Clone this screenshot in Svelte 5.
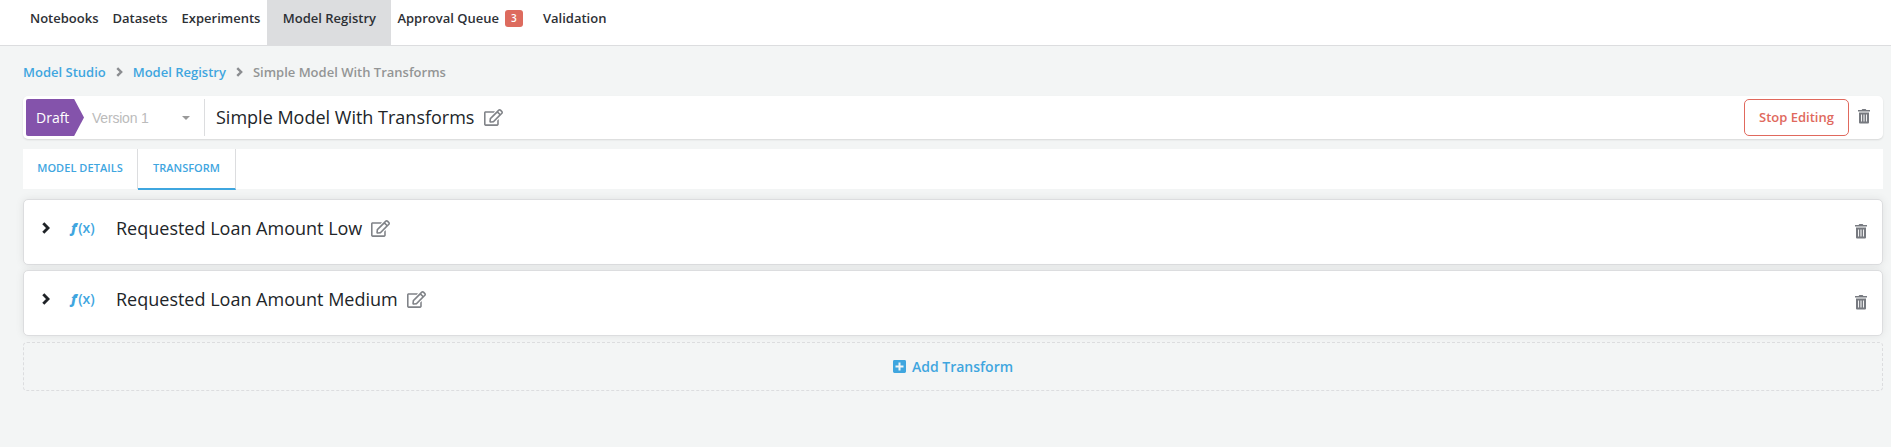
<script>
  const navLeft = ['Notebooks', 'Datasets', 'Experiments'];
  const transforms = ['Requested Loan Amount Low', 'Requested Loan Amount Medium'];
</script>

{#snippet edit()}
  <svg class="edit" viewBox="0 0 576 512" aria-hidden="true">
    <path d="M402.3 344.9l32-32c5-5 13.7-1.5 13.7 5.7V464c0 26.5-21.5 48-48 48H48c-26.5 0-48-21.5-48-48V112c0-26.5 21.5-48 48-48h273.5c7.1 0 10.7 8.6 5.7 13.7l-32 32c-1.5 1.5-3.5 2.3-5.7 2.3H48v352h352V350.5c0-2.1.8-4.1 2.3-5.6zm156.6-201.8L296.3 405.7l-90.4 10c-26.2 2.9-48.5-19.2-45.6-45.6l10-90.4L432.9 17.1c22.9-22.9 59.9-22.9 82.7 0l43.2 43.2c22.9 22.9 22.9 60 .1 82.8zM460.1 174L402 115.9 216.2 301.8l-7.3 65.3 65.3-7.3L460.1 174zm64.8-79.7l-43.2-43.2c-4.1-4.1-10.8-4.1-14.8 0L436 82l58.1 58.1 30.9-30.9c4-4.2 4-10.8-.1-14.9z" />
  </svg>
{/snippet}

{#snippet trash()}
  <svg class="trash" viewBox="0 0 12 15" aria-hidden="true">
    <path fill-rule="evenodd" d="M0 1h3.6L4.4 0h3.2l.8 1H12v1.6H0zM1 3.6h10V13.4a1 1 0 0 1-1 1H2a1 1 0 0 1-1-1zM3 5.4v7h.9v-7zM5.5 5.4v7h1v-7zM8.1 5.4v7H9v-7z" />
  </svg>
{/snippet}

{#snippet chevron()}
  <svg class="chevron" viewBox="0 0 8 12" aria-hidden="true"><path d="M1.3 1.3L6 6l-4.7 4.7" /></svg>
{/snippet}

<div class="page">
  <nav class="top">
    {#each navLeft as item}<a class="link" href="#top">{item}</a>{/each}
    <a class="link active" href="#top">Model Registry</a>
    <a class="link queue" href="#top">Approval Queue<span class="count">3</span></a>
    <a class="link last" href="#top">Validation</a>
  </nav>

  <main>
    <div class="crumbs">
      <a href="#top">Model Studio</a>
      {@render chevron()}
      <a href="#top">Model Registry</a>
      {@render chevron()}
      <span>Simple Model With Transforms</span>
    </div>

    <header class="bar">
      <div class="draft">Draft</div>
      <div class="version"><span>Version 1</span><i class="caret"></i></div>
      <h1>Simple Model With Transforms</h1>
      {@render edit()}
      <button class="stop">Stop Editing</button>
      {@render trash()}
    </header>

    <div class="tabs">
      <a class="tab details" href="#top">MODEL DETAILS</a>
      <a class="tab current" href="#top">TRANSFORM</a>
    </div>

    <section class="list">
      {#each transforms as name}
        <article class="card">
          {@render chevron()}
          <span class="fx"><b>ƒ</b>(x)</span>
          <h2>{name}</h2>
          {@render edit()}
          {@render trash()}
        </article>
      {/each}
      <button class="add">
        <svg viewBox="0 0 13 13" aria-hidden="true"><path fill-rule="evenodd" d="M1.4 0h10.2A1.4 1.4 0 0 1 13 1.4v10.2a1.4 1.4 0 0 1-1.4 1.4H1.4A1.4 1.4 0 0 1 0 11.6V1.4A1.4 1.4 0 0 1 1.4 0zM5.5 2.5v3h-3v2h3v3h2v-3h3v-2h-3v-3z" /></svg>
        <span>Add Transform</span>
      </button>
    </section>
  </main>
</div>

<style>
  :global(body) { background: #f3f5f5; }
  .page { min-height: 447px; background: #f3f5f5; font-family: "Open Sans", sans-serif; color: #212529; font-size: 13px; }
  .page, .page * { box-sizing: border-box; }
  a { text-decoration: none; color: inherit; }
  button { font: inherit; background: none; padding: 0; }
  h1, h2 { margin: 0; font-weight: 400; font-size: 18px; line-height: 24px; white-space: nowrap; }
  svg { display: block; flex: none; }

  .top { height: 46px; background: #fff; border-bottom: 1px solid #dcdddf; display: flex; padding-left: 30px; font-weight: 600; color: #2d3035; }
  .link { height: 45px; line-height: 18px; padding-top: 9px; margin-right: 14px; white-space: nowrap; }
  .active { width: 124px; background: #dcdddf; text-align: center; margin: 0 6px 0 -7px; }
  .queue { display: flex; margin-right: 20px; }
  .count { width: 18px; height: 17px; margin: 1px 0 0 6px; border-radius: 3px; background: #dd6b5e; color: #fff; font-size: 10px; line-height: 17px; text-align: center; }

  main { padding: 0 8px 0 23px; }
  .crumbs { height: 50px; padding-top: 2px; display: flex; align-items: center; font-weight: 600; color: #939595; }
  .crumbs a { color: #3fa6df; }
  .chevron { fill: none; stroke: currentColor; stroke-width: 2.9; }
  .crumbs .chevron { width: 7px; height: 10px; margin: -1px 10px 0 10px; color: #8b8d90; }

  .bar { height: 43px; background: #fff; border-radius: 5px; box-shadow: 0 1px 2px rgba(0,0,0,.12); display: flex; align-items: center; padding: 0 13px 0 3px; }
  .draft { width: 58px; height: 37px; background: #8453ab; color: #fff; font-size: 14px; line-height: 38px; padding-left: 10px; border-radius: 2px 0 0 2px; clip-path: polygon(0 0, 83% 0, 100% 50%, 83% 100%, 0 100%); }
  .version { width: 121px; height: 37px; border-right: 1px solid #dcdddf; display: flex; align-items: center; justify-content: space-between; padding: 0 14px 0 8px; color: #bbb; font-family: "Liberation Sans", sans-serif; font-size: 14px; letter-spacing: -.2px; }
  .caret { border: 4px solid transparent; border-top-color: #999; border-bottom: 0; }
  h1 { margin: -2px 0 0 11px; }
  .edit { width: 19px; height: 17px; fill: #808388; margin-left: 9px; }
  .bar .edit { margin: -1px 0 0 10px; }
  .stop { margin-left: auto; width: 105px; height: 37px; padding-bottom: 2px; border: 1px solid #e0695d; border-radius: 5px; color: #e0695d; font-weight: 600; }
  .trash { width: 12px; height: 15px; fill: #777a80; }
  .bar .trash { margin: -2px 0 0 9px; }

  .tabs { height: 40px; margin-top: 10px; background: #fff; display: flex; color: #3fa6df; font-size: 11px; font-weight: 600; }
  .tab { height: 41px; line-height: 38px; border-right: 1px solid #dcdddf; text-align: center; }
  .details { width: 115px; height: 40px; letter-spacing: .05px; }
  .current { width: 98px; border-bottom: 2px solid #3fa6df; }

  .list { margin-top: 10px; display: grid; gap: 5px; }
  .card { height: 66px; background: #fff; border: 1px solid #dcdddf; border-radius: 5px; box-shadow: 0 0 8px rgba(0,0,0,.08); display: flex; align-items: flex-start; padding: 16px 15px 0 18px; }
  .card .chevron { width: 8px; height: 12px; margin-top: 6px; color: #1f2327; }
  .fx { width: 46px; margin-left: 20px; line-height: 24px; color: #3fa6df; font-size: 14px; font-weight: 600; white-space: nowrap; }
  .fx b { font-style: italic; }
  .card .edit { margin-top: 4px; }
  .card .trash { margin: 8px 0 0 auto; }
  .add { height: 49px; margin-top: 1px; border: 1px dashed #dcdddf; border-radius: 4px; display: flex; align-items: center; justify-content: center; color: #3fa6df; font-size: 14px; font-weight: 600; }
  .add svg { width: 13px; height: 13px; fill: currentColor; margin-right: 6px; }
</style>
